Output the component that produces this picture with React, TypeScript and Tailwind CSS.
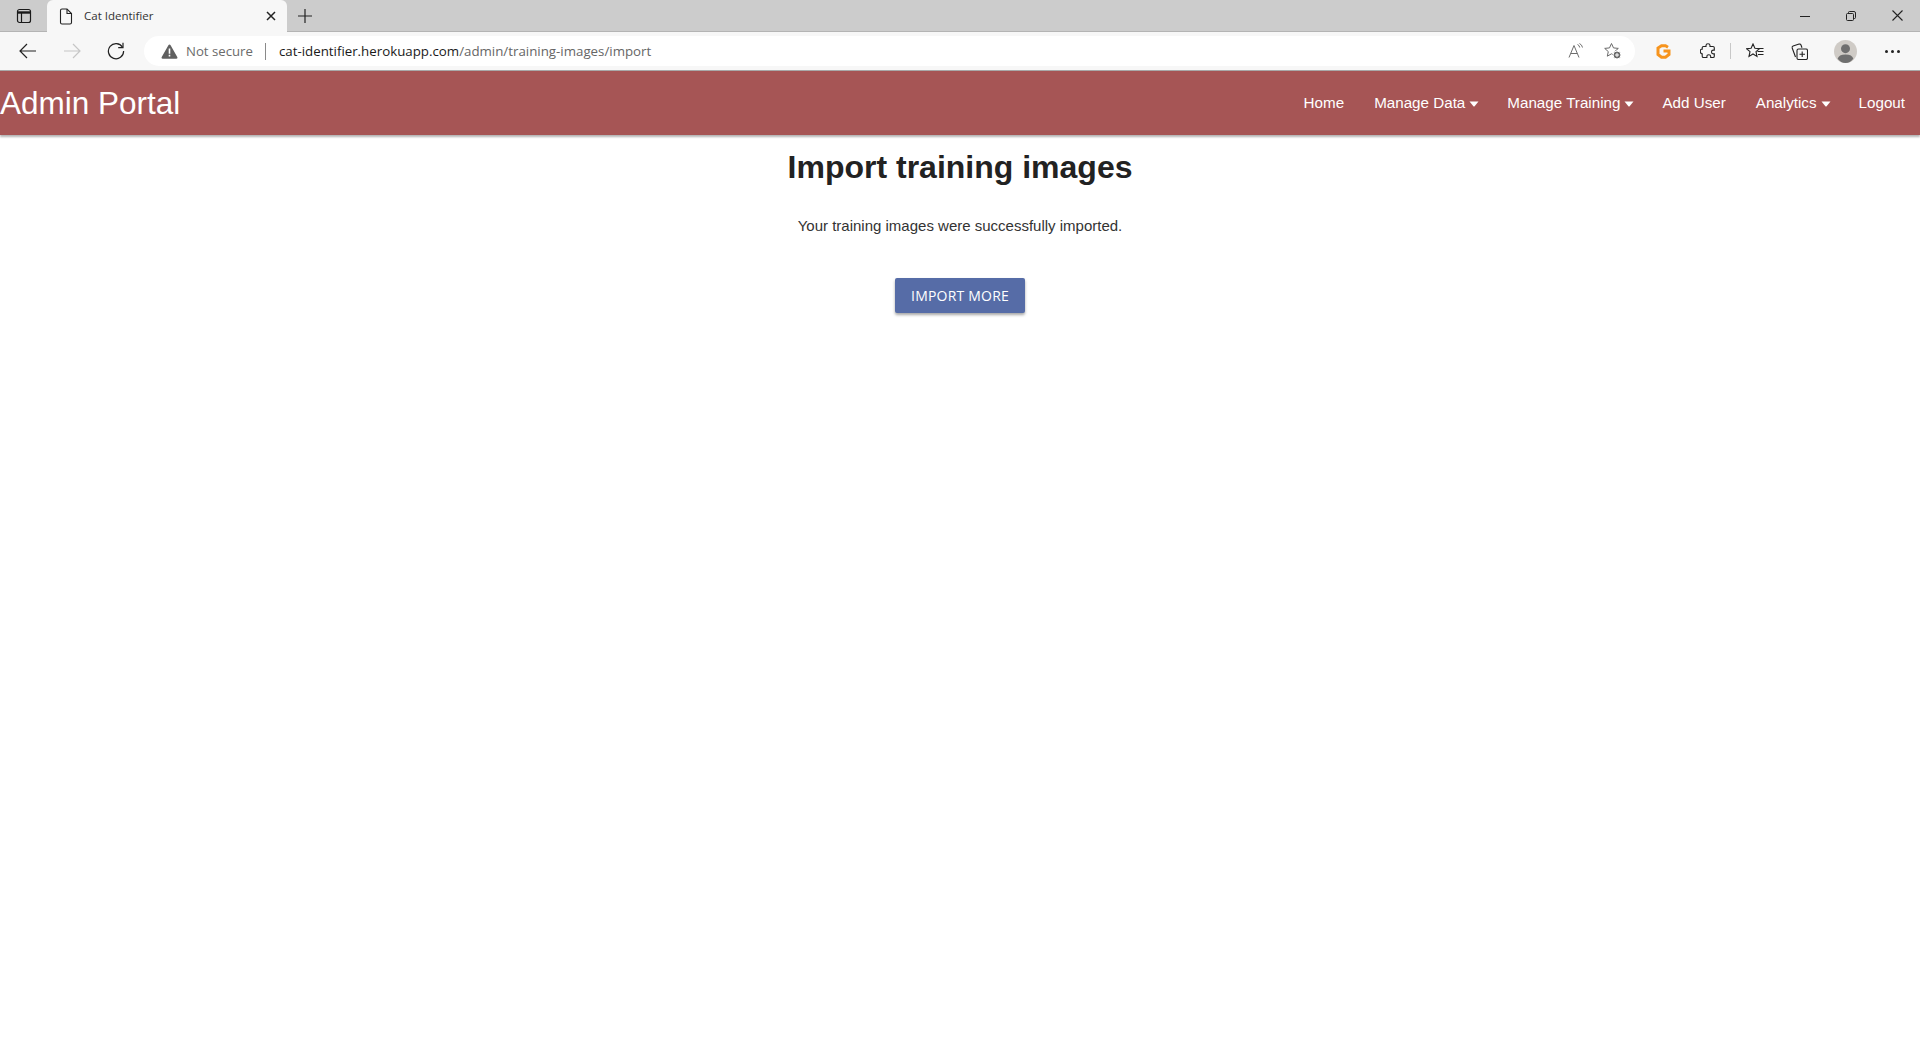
import React from 'react';

const Caret: React.FC = () => (
  <svg className="ml-[4px] mr-[-2px] mt-[2px] h-[6px] w-[10px]" viewBox="0 0 10 6" fill="#fff">
    <path d="M0.5 0.5h9L5.600 5.200q-.6.6-1.200 0z" />
  </svg>
);

const TabStrip: React.FC = () => (
  <div className="flex h-[32px] items-stretch bg-[#cccccc] border-b border-[#b4b4b4]">
    <div className="flex w-[47px] items-center justify-center">
      <svg width="16" height="16" viewBox="0 0 16 16" fill="none" stroke="#1a1a1a" strokeWidth="1.200">
        <rect x="1.500" y="1.500" width="13" height="13" rx="2" />
        <path d="M1.500 4.500h13" strokeWidth="2.400" />
        <path d="M5.500 4.500v10" />
      </svg>
    </div>
    <div className="flex h-[32px] w-[240px] items-center rounded-t-[6px] bg-[#f7f7f7] pl-[12px] pr-[11px]">
      <svg width="14" height="17" viewBox="0 0 14 17" fill="none" stroke="#222" strokeWidth="1.100">
        <path d="M1.500 2.500q0-1.500 1.500-1.500h5l4.500 4.500v9q0 1.500-1.500 1.500H3q-1.500 0-1.500-1.500z" />
        <path d="M8 1v4.500h4.500" />
      </svg>
      <span className="ml-[11px] flex-1 text-[11.500px] text-[#333]">Cat Identifier</span>
      <svg width="10" height="10" viewBox="0 0 10 10" stroke="#222" strokeWidth="1.500">
        <path d="M1 1l8 8M9 1l-8 8" />
      </svg>
    </div>
    <div className="flex w-[36px] items-center justify-center">
      <svg width="14" height="14" viewBox="0 0 14 14" stroke="#222" strokeWidth="1.200">
        <path d="M7 0v14M0 7h14" />
      </svg>
    </div>
    <div className="flex-1" />
    <div className="flex items-center">
      <div className="flex w-[46px] justify-center">
        <svg width="10" height="10" viewBox="0 0 10 10" stroke="#222"><path d="M0 5.500h10" /></svg>
      </div>
      <div className="flex w-[46px] justify-center">
        <svg width="10" height="10" viewBox="0 0 10 10" fill="none" stroke="#222">
          <rect x="0.500" y="2.500" width="7" height="7" rx="1" />
          <path d="M2.500 2.500v-1q0-1 1-1h4.500q1.500 0 1.500 1.500v4.500q0 1-1 1h-1" />
        </svg>
      </div>
      <div className="flex w-[46px] justify-center">
        <svg width="11" height="11" viewBox="0 0 11 11" stroke="#222" strokeWidth="1.100"><path d="M.5.5l10 10M10.500.5l-10 10" /></svg>
      </div>
    </div>
  </div>
);

const Toolbar: React.FC = () => (
  <div className="flex h-[39px] items-center bg-[#f7f7f7] border-b border-[#a9a9a9] font-['Open_Sans',sans-serif]">
    <div className="flex w-[144px] items-center pl-[6px]">
      <div className="flex w-[44px] justify-center">
        <svg width="18" height="16" viewBox="0 0 18 16" fill="none" stroke="#222" strokeWidth="1.200"><path d="M17 8H1M8 1L1 8l7 7" /></svg>
      </div>
      <div className="flex w-[44px] justify-center">
        <svg width="18" height="16" viewBox="0 0 18 16" fill="none" stroke="#c6c6c6" strokeWidth="1.200"><path d="M1 8h16M10 1l7 7-7 7" /></svg>
      </div>
      <div className="flex w-[44px] justify-center">
        <svg width="18" height="18" viewBox="0 0 18 18" fill="none" stroke="#222" strokeWidth="1.200">
          <path d="M15.500 5.200A7.600 7.600 0 1 0 16.600 9" />
          <path d="M16 .8v4.800h-4.800" />
        </svg>
      </div>
    </div>
    <div className="flex h-[30px] w-[1491px] items-center rounded-full bg-white pl-[17px] pr-[13px]">
      <svg width="17" height="15" viewBox="0 0 17 15">
        <path d="M8.500.5q.7 0 1.100.7l6.800 12q.5 1.300-1 1.500H1.600q-1.500-.2-1-1.500l6.800-12q.4-.7 1.100-.7z" fill="#606060" />
        <path d="M7.700 4.500h1.600v5.200H7.700zM7.700 10.800h1.600v1.600H7.700z" fill="#fff" />
      </svg>
      <span className="ml-[8px] pt-[1px] text-[13.200px] text-[#6b6b6b]">Not secure</span>
      <span className="ml-[12px] h-[17px] w-px bg-[#8a8a8a]" />
      <span className="ml-[13px] flex-1 pt-[1px] text-[13.300px] text-[#666]">
        <span className="text-[#1a1a1a]">cat-identifier.herokuapp.com</span>/admin/training-images/import
      </span>
      <svg width="16" height="16" viewBox="0 0 16 16" fill="none" stroke="#6e6e6e" strokeWidth="1">
        <path d="M1 14.500L6 2.500l5 12M2.800 10.500h6.400" />
        <path d="M9.500 1.500q2 .8 2.200 3M11.500 .5q2.500 1.300 3 4" />
      </svg>
      <svg className="ml-[20px]" width="18" height="18" viewBox="0 0 18 18" fill="none" stroke="#6a6a6a" strokeWidth="1">
        <path d="M7.500 1.500l2 4.400 4.800.5-3.600 3.200 1 4.600-4.200-2.400-4.200 2.400 1-4.600L.7 6.400l4.800-.5z" />
        <circle cx="13" cy="13" r="4" fill="#6a6a6a" stroke="#fff" />
        <path d="M13 11v4M11 13h4" stroke="#fff" />
      </svg>
    </div>
    <div className="flex flex-1 items-center pl-[6px]">
      <div className="flex w-[44px] justify-center">
        <svg width="15" height="15" viewBox="0 0 15 15" fill="none" stroke="#f7941d" strokeWidth="3">
          <path d="M12 3.200L9.500 1.800h-4L2 4v6.500l3.500 2.700h4l3.500-2.700V7H7.500" />
        </svg>
      </div>
      <div className="flex w-[45px] justify-center">
        <svg width="16" height="16" viewBox="0 0 16 16" fill="none" stroke="#222" strokeWidth="1.100">
          <path d="M6 2.600q0-1.800 2-1.800t2 1.800v.9h3q1.300 0 1.300 1.300v2.300h-1q-1.800 0-1.800 1.900t1.800 1.900h1v2.300q0 1.300-1.300 1.300h-2.300v-1q0-1.800-1.900-1.800t-1.900 1.800v1H3.500q-1.300 0-1.300-1.300v-2.400h-.6Q.3 10 .3 8.200t1.300-1.900h.6V4.800q0-1.300 1.300-1.300H6z" />
        </svg>
      </div>
      <span className="h-[16px] w-px bg-[#c8c8c8]" />
      <div className="ml-[2px] flex w-[44px] justify-center">
        <svg width="18" height="16" viewBox="0 0 18 16" fill="none" stroke="#222" strokeWidth="1.100">
          <path d="M7 1l1.900 4.300 4.600.4-3.500 3 1 4.700L7 11l-4 2.400 1-4.700-3.500-3 4.600-.4z" />
          <path d="M12.500 5.500h5M11.500 8.500h6M12 11.500h5.500" />
        </svg>
      </div>
      <div className="flex w-[45px] justify-center">
        <svg width="17" height="17" viewBox="0 0 17 17" fill="none" stroke="#222" strokeWidth="1.100">
          <rect x="6" y="6" width="10.500" height="10.500" rx="1.500" />
          <path d="M11.200 8.500v5.500M8.500 11.200h5.500" />
          <path d="M4.500 14L1.200 5q-.4-1.400.9-1.900l6-2q1.400-.4 1.900.9l1 2.800" />
        </svg>
      </div>
      <div className="flex w-[46px] justify-center">
        <svg width="23" height="23" viewBox="0 0 22 22">
          <circle cx="11" cy="11" r="11" fill="#cfcbc6" />
          <circle cx="11" cy="8.300" r="4.300" fill="#6f6f6f" />
          <path d="M3.500 18q1-4.200 7.500-4.200T18.500 18q-3 4-7.500 4t-7.500-4z" fill="#6f6f6f" />
        </svg>
      </div>
      <div className="flex w-[47px] justify-center gap-[3px] pl-[2px]">
        <span className="h-[3px] w-[3px] rounded-full bg-[#222]" />
        <span className="h-[3px] w-[3px] rounded-full bg-[#222]" />
        <span className="h-[3px] w-[3px] rounded-full bg-[#222]" />
      </div>
    </div>
  </div>
);

const NavItem: React.FC<{ label: string; caret?: boolean }> = ({ label, caret }) => (
  <a className="flex h-full items-center px-[15px] text-[15.200px] text-white">
    {label}
    {caret && <Caret />}
  </a>
);

const App: React.FC = () => {
  return (
    <div className="flex min-h-screen flex-col overflow-hidden bg-white font-['Liberation_Sans',Arial,sans-serif]">
      <div className="font-['Open_Sans',sans-serif]">
        <TabStrip />
      </div>
      <Toolbar />
      <nav className="flex h-[64px] items-center justify-between bg-[#a65555] shadow-[0_2px_2px_rgba(0,0,0,0.3)]">
        <span className="pt-[1px] text-[31.500px] leading-none text-white">Admin Portal</span>
        <div className="flex h-full items-center">
          <NavItem label="Home" />
          <NavItem label="Manage Data" caret />
          <NavItem label="Manage Training" caret />
          <NavItem label="Add User" />
          <NavItem label="Analytics" caret />
          <NavItem label="Logout" />
        </div>
      </nav>
      <main className="flex flex-col items-center">
        <h1 className="mt-[13px] text-[32px] font-bold leading-[38px] text-[#222]">Import training images</h1>
        <p className="mt-[29px] text-[15px] leading-[22px] text-[#333]">Your training images were successfully imported.</p>
        <button className="mt-[41px] h-[35px] w-[130px] rounded-[2px] bg-[#566ca7] font-['Open_Sans',sans-serif] text-[14px] tracking-[0.2px] text-white shadow-[0_2px_3px_rgba(0,0,0,0.35)]">
          IMPORT MORE
        </button>
      </main>
    </div>
  );
};

export default App;
